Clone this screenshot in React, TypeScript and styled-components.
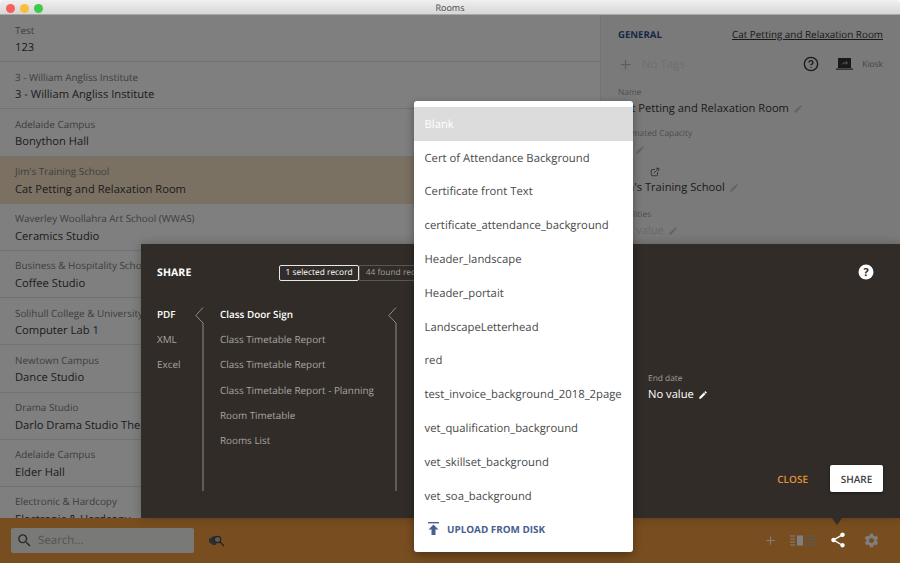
import React from "react";
import styled, { createGlobalStyle } from "styled-components";
import { FiPlus, FiHelpCircle, FiExternalLink } from "react-icons/fi";
import { MdEdit, MdSearch, MdSettings, MdShare } from "react-icons/md";

const rooms = [
  { site: "Test", name: "123" },
  { site: "3 - William Angliss Institute", name: "3 - William Angliss Institute" },
  { site: "Adelaide Campus", name: "Bonython Hall" },
  { site: "Jim's Training School", name: "Cat Petting and Relaxation Room", selected: true },
  { site: "Waverley Woollahra Art School (WWAS)", name: "Ceramics Studio" },
  { site: "Business & Hospitality School", name: "Coffee Studio" },
  { site: "Solihull College & University", name: "Computer Lab 1" },
  { site: "Newtown Campus", name: "Dance Studio" },
  { site: "Drama Studio", name: "Darlo Drama Studio Theatre" },
  { site: "Adelaide Campus", name: "Elder Hall" },
  { site: "Electronic & Hardcopy", name: "Electronic & Hardcopy" },
];

const backgrounds = [
  "Blank",
  "Cert of Attendance Background",
  "Certificate front Text",
  "certificate_attendance_background",
  "Header_landscape",
  "Header_portait",
  "LandscapeLetterhead",
  "red",
  "test_invoice_background_2018_2page",
  "vet_qualification_background",
  "vet_skillset_background",
  "vet_soa_background",
];

const reports = [
  "Class Timetable Report",
  "Class Timetable Report",
  "Class Timetable Report - Planning",
  "Room Timetable",
  "Rooms List",
];

const GlobalStyle = createGlobalStyle`
  html, body {
    margin: 0;
    padding: 0;
    background: #fff;
  }
  body {
    font-family: "Open Sans", "Liberation Sans", sans-serif;
    overflow: hidden;
    text-rendering: geometricPrecision;
  }
`;

const Window = styled.div`
  position: relative;
  width: 900px;
  height: 563px;
  display: flex;
  flex-direction: column;
  overflow: hidden;
  background: #fff;
`;

const TitleBar = styled.div`
  height: 15px;
  flex: none;
  position: relative;
  display: flex;
  align-items: center;
  justify-content: center;
  font-size: 9px;
  color: #444;
  background: linear-gradient(#f0f0f0, #d6d6d6);
  border-radius: 4px 4px 0 0;
  box-sizing: border-box;
  border-bottom: 1px solid #a8a8a8;
`;

const Lights = styled.div`
  position: absolute;
  left: 5.5px;
  top: 3.5px;
  display: flex;
  gap: 5px;
`;

const Light = styled.span<{ $color: string }>`
  width: 9px;
  height: 9px;
  border-radius: 50%;
  background: ${(p) => p.$color};
`;

const Main = styled.div`
  flex: 1;
  display: flex;
  min-height: 0;
`;

const List = styled.div`
  width: 600px;
  flex: none;
  overflow: hidden;
`;

const Row = styled.div<{ $selected?: boolean }>`
  height: 47.2px;
  box-sizing: border-box;
  padding: 7.5px 15px 0;
  border-bottom: 1px solid ${(p) => (p.$selected ? "transparent" : "#e4e4e4")};
  background: ${(p) => (p.$selected ? "#f6e2c4" : "transparent")};
`;

const RowLabel = styled.div`
  font-size: 9.9px;
  line-height: 14px;
  font-weight: 400;
  color: #7c7c7c;
  white-space: nowrap;
`;

const RowName = styled.div`
  font-size: 11.2px;
  line-height: 17px;
  margin-top: 2.5px;
  color: #3a3a3a;
  white-space: nowrap;
`;

const Detail = styled.div`
  flex: 1;
  box-sizing: border-box;
  padding: 12px 17px 0 17px;
  border-left: 1px solid #e8e8e8;
  background: #f5f5f5;
`;

const DetailHead = styled.div`
  display: flex;
  justify-content: space-between;
  align-items: center;
  height: 14px;
`;

const SectionTitle = styled.div`
  font-size: 9.6px;
  font-weight: 700;
  color: #2f4f8f;
`;

const RecordLink = styled.div`
  font-size: 9.9px;
  color: #333;
  text-decoration: underline;
`;

const TagRow = styled.div`
  display: flex;
  align-items: center;
  margin-top: 14px;
  height: 18px;
  color: #bbb;
`;

const NoTags = styled.span`
  font-size: 11.4px;
  color: #dedede;
  margin-left: 9px;
  flex: 1;
`;

const Kiosk = styled.span`
  font-size: 8.4px;
  color: #8a8a8a;
  margin-left: 9px;
`;

const KioskIcon = styled.svg`
  margin-left: 17px;
`;

const Field = styled.div<{ $gap: number }>`
  margin-top: ${(p) => p.$gap}px;
`;

const FieldLabel = styled.div<{ $light?: boolean }>`
  font-size: 8.4px;
  line-height: 13px;
  color: ${(p) => (p.$light ? "#a09d98" : "#9c9c9c")};
  display: flex;
  align-items: center;
  gap: 6px;
  min-height: 13px;
`;

const FieldValue = styled.div<{ $muted?: boolean; $light?: boolean }>`
  font-size: 11.2px;
  line-height: 17px;
  display: flex;
  align-items: center;
  gap: 4px;
  margin-top: 1px;
  min-height: 17px;
  white-space: nowrap;
  color: ${(p) => (p.$light ? "#fff" : p.$muted ? "#d0d0d0" : "#3a3a3a")};
`;

const BottomBar = styled.div`
  height: 45px;
  flex: none;
  display: flex;
  align-items: center;
  box-sizing: border-box;
  padding: 0 20px 0 11px;
  background: #f09c40;
  color: #8d8d8d;
`;

const SearchBox = styled.div`
  width: 183px;
  height: 25px;
  box-sizing: border-box;
  padding-left: 5px;
  display: flex;
  align-items: center;
  gap: 5px;
  border-radius: 2px;
  background: #f3f3f1;
  color: #555;
  font-size: 11.5px;
`;

const Placeholder = styled.span`
  color: #a8a8a8;
`;

const Spacer = styled.div`
  flex: 1;
`;

const FindIcon = styled.svg`
  margin-left: 14px;
`;

const ToolIcons = styled.div`
  display: flex;
  align-items: center;
  color: #fff;
`;

const ViewSwitch = styled.svg`
  margin: 0 12px 0 13px;
`;

const ShareSlot = styled.div`
  width: 16px;
  height: 16px;
  margin-right: 18px;
`;

const Dim = styled.div`
  position: absolute;
  inset: 15px 0 0 0;
  background: rgba(0, 0, 0, 0.5);
`;

const ShareIcon = styled.div`
  position: absolute;
  left: 829px;
  top: 531px;
  color: #fff;
  display: flex;
`;

const Modal = styled.div`
  position: absolute;
  left: 141px;
  right: 0;
  top: 244px;
  height: 274px;
  box-sizing: border-box;
  padding: 21px 17px 0 16px;
  background: #312c27;
  color: #fff;
  box-shadow: 0 0 10px rgba(0, 0, 0, 0.25);
`;

const Notch = styled.div`
  position: absolute;
  left: 691px;
  bottom: -7px;
  width: 0;
  height: 0;
  border-left: 5px solid transparent;
  border-right: 5px solid transparent;
  border-top: 7px solid #312c27;
`;

const ModalHead = styled.div`
  display: flex;
  align-items: center;
  height: 15px;
`;

const ModalTitle = styled.div`
  width: 122px;
  font-size: 10.5px;
  font-weight: 700;
  letter-spacing: 0.1px;
`;

const Tab = styled.div<{ $active?: boolean }>`
  height: 16px;
  box-sizing: border-box;
  padding: 0 5.5px;
  display: flex;
  align-items: center;
  font-size: 8.4px;
  white-space: nowrap;
  color: ${(p) => (p.$active ? "#fff" : "#a09d98")};
  border: 1px solid ${(p) => (p.$active ? "#e8e8e8" : "#5a5650")};
  border-radius: ${(p) => (p.$active ? "2px" : "0 2px 2px 0")};
`;

const HelpIcon = styled.svg`
  position: absolute;
  right: 26px;
  top: 20px;
`;

const Columns = styled.div`
  display: flex;
  margin-top: 21px;
`;

const Column = styled.div<{ $width: number }>`
  width: ${(p) => p.$width}px;
  flex: none;
`;

const Divider = styled.svg`
  flex: none;
  margin: 6px 16px 0 0;
`;

const Choice = styled.div<{ $active?: boolean }>`
  height: 25.3px;
  display: flex;
  align-items: center;
  font-size: 9.9px;
  white-space: nowrap;
  font-weight: ${(p) => (p.$active ? 600 : 400)};
  color: ${(p) => (p.$active ? "#fff" : "#a8a5a0")};
`;

const DateField = styled.div`
  margin: 71px 0 0 235px;
`;

const ModalActions = styled.div`
  position: absolute;
  right: 17px;
  bottom: 26px;
  display: flex;
  align-items: center;
  gap: 22px;
`;

const CloseButton = styled.div`
  font-size: 10px;
  font-weight: 600;
  color: #e0913a;
`;

const ShareButton = styled.div`
  width: 53px;
  height: 27px;
  display: flex;
  align-items: center;
  justify-content: center;
  border-radius: 2px;
  background: #fff;
  color: #3d3d3d;
  font-size: 10px;
  font-weight: 600;
  box-shadow: 0 1px 3px rgba(0, 0, 0, 0.5);
`;

const Menu = styled.div`
  position: absolute;
  left: 414px;
  top: 101px;
  width: 219px;
  height: 451px;
  box-sizing: border-box;
  padding-top: 6px;
  background: #fff;
  border-radius: 3px;
  box-shadow: 0 3px 10px rgba(0, 0, 0, 0.35);
`;

const MenuItem = styled.div<{ $selected?: boolean }>`
  height: 33.8px;
  box-sizing: border-box;
  padding: 1px 0 0 10.5px;
  display: flex;
  align-items: center;
  font-size: 11.3px;
  white-space: nowrap;
  color: ${(p) => (p.$selected ? "#fff" : "#4a4a4a")};
  background: ${(p) => (p.$selected ? "#dcdcdc" : "transparent")};
`;

const UploadRow = styled.div`
  height: 32px;
  display: flex;
  align-items: center;
  gap: 8px;
  padding-left: 14px;
  font-size: 9.9px;
  font-weight: 700;
  color: #46618f;
`;

const PencilMuted = () => <MdEdit size={10} color="#c8c8c8" />;

export default function App() {
  return (
    <Window>
      <GlobalStyle />
      <TitleBar>
        <Lights>
          <Light $color="#f7605a" />
          <Light $color="#f9bd3c" />
          <Light $color="#3fc84c" />
        </Lights>
        Rooms
      </TitleBar>
      <Main>
        <List>
          {rooms.map((room, i) => (
            <Row key={i} $selected={room.selected}>
              <RowLabel>{room.site}</RowLabel>
              <RowName>{room.name}</RowName>
            </Row>
          ))}
        </List>
        <Detail>
          <DetailHead>
            <SectionTitle>GENERAL</SectionTitle>
            <RecordLink>Cat Petting and Relaxation Room</RecordLink>
          </DetailHead>
          <TagRow>
            <FiPlus size={15} />
            <NoTags>No Tags</NoTags>
            <FiHelpCircle size={16} color="#333" />
            <KioskIcon width="17" height="12" viewBox="0 0 17 12">
              <rect x="2" y="0" width="13" height="10" fill="#333" />
              <rect x="0" y="10.5" width="17" height="1.2" fill="#333" />
              <path d="M6 7c0-2 1.5-3 4-3V2.5L12 5 10 7V5.5c-2 0-3 .5-4 1.5z" fill="#999" />
            </KioskIcon>
            <Kiosk>Kiosk</Kiosk>
          </TagRow>
          <Field $gap={13}>
            <FieldLabel>Name</FieldLabel>
            <FieldValue>
              Cat Petting and Relaxation Room <PencilMuted />
            </FieldValue>
          </Field>
          <Field $gap={10}>
            <FieldLabel>Estimated Capacity</FieldLabel>
            <FieldValue $muted>
              12 <PencilMuted />
            </FieldValue>
          </Field>
          <Field $gap={7}>
            <FieldLabel>
              Site <FiExternalLink size={10} color="#555" style={{ marginLeft: 12 }} />
            </FieldLabel>
            <FieldValue>
              Jim's Training School <PencilMuted />
            </FieldValue>
          </Field>
          <Field $gap={12}>
            <FieldLabel>Facilities</FieldLabel>
            <FieldValue $muted>
              No value <PencilMuted />
            </FieldValue>
          </Field>
        </Detail>
      </Main>
      <BottomBar>
        <SearchBox>
          <MdSearch size={17} />
          <Placeholder>Search...</Placeholder>
        </SearchBox>
        <FindIcon width="17" height="12" viewBox="0 0 17 12">
          <path d="M1 4l5-3 3 1-1 8-3 0-4-3z" fill="#5a5a5a" />
          <circle cx="9.5" cy="4.5" r="3.2" fill="#b9b4a6" stroke="#444" strokeWidth="1.2" />
          <path d="M12 7l4 4" stroke="#444" strokeWidth="1.5" />
        </FindIcon>
        <Spacer />
        <ToolIcons>
          <FiPlus size={13} />
          <ViewSwitch width="27" height="11" viewBox="0 0 27 11">
            <path d="M0 1h5M0 4h5M0 7h5M0 10h5" stroke="#fff" strokeWidth="1.2" />
            <rect x="7" y="0.5" width="6" height="10" fill="#fff" />
            <path d="M15 1h12M15 4h12M15 7h12M15 10h12" stroke="#b0b0b0" strokeWidth="1" />
          </ViewSwitch>
          <ShareSlot />
          <MdSettings size={17} />
        </ToolIcons>
      </BottomBar>
      <Dim />
      <Modal>
        <ModalHead>
          <ModalTitle>SHARE</ModalTitle>
          <Tab $active>1 selected record</Tab>
          <Tab>44 found records</Tab>
        </ModalHead>
        <HelpIcon width="16" height="16" viewBox="0 0 16 16">
          <circle cx="8" cy="8" r="7.5" fill="#fff" />
          <text x="8" y="12" textAnchor="middle" fontSize="11" fontWeight="700" fontFamily="Open Sans" fill="#312c27">
            ?
          </text>
        </HelpIcon>
        <Columns>
          <Column $width={38}>
            <Choice $active>PDF</Choice>
            <Choice>XML</Choice>
            <Choice>Excel</Choice>
          </Column>
          <Divider width="9" height="184" viewBox="0 0 9 184">
            <path d="M8 0.5L0.8 8.5L8 16V184" fill="none" stroke="#8f8c87" strokeWidth="1" />
          </Divider>
          <Column $width={168}>
            <Choice $active>Class Door Sign</Choice>
            {reports.map((report, i) => (
              <Choice key={i}>{report}</Choice>
            ))}
          </Column>
          <Divider width="9" height="184" viewBox="0 0 9 184">
            <path d="M8 0.5L0.8 8.5L8 16V184" fill="none" stroke="#8f8c87" strokeWidth="1" />
          </Divider>
          <DateField>
            <FieldLabel $light>End date</FieldLabel>
            <FieldValue $light>
              No value <MdEdit size={10} color="#fff" />
            </FieldValue>
          </DateField>
        </Columns>
        <ModalActions>
          <CloseButton>CLOSE</CloseButton>
          <ShareButton>SHARE</ShareButton>
        </ModalActions>
        <Notch />
      </Modal>
      <ShareIcon>
        <MdShare size={18} />
      </ShareIcon>
      <Menu>
        {backgrounds.map((item, i) => (
          <MenuItem key={item} $selected={i === 0}>
            {item}
          </MenuItem>
        ))}
        <UploadRow>
          <svg width="11" height="13" viewBox="0 0 11 13">
            <path d="M0 0.7h11" stroke="#46618f" strokeWidth="1.4" />
            <path d="M5.5 2.5L10.5 7.5H7.5V13H3.5V7.5H0.5z" fill="#46618f" />
          </svg>
          UPLOAD FROM DISK
        </UploadRow>
      </Menu>
    </Window>
  );
}
